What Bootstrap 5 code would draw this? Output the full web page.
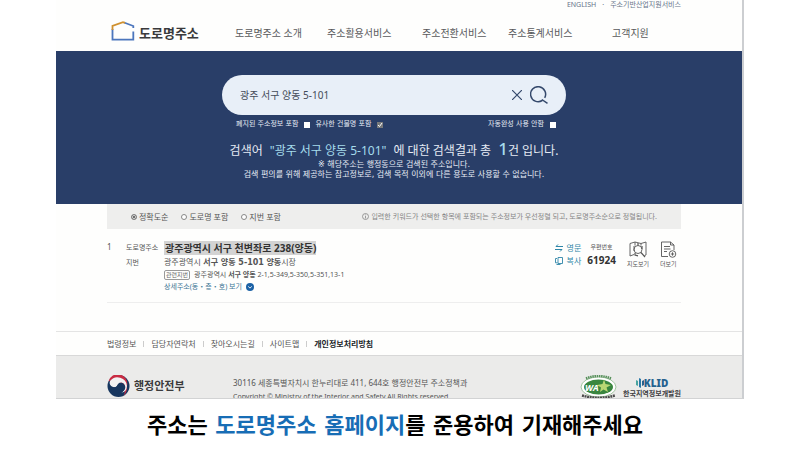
<!DOCTYPE html>
<html lang="ko">
<head>
<meta charset="utf-8">
<meta name="viewport" content="width=device-width, initial-scale=1">
<title>도로명주소</title>
<link rel="stylesheet" href="https://cdn.jsdelivr.net/npm/bootstrap@5.3.0/dist/css/bootstrap.min.css">
<style>
body{font-family:"Noto Sans","Noto Sans CJK KR",sans-serif;font-size:8px;line-height:12px;color:#555;background:#fff}
a{color:inherit;text-decoration:none}
button{background:none;border:0;padding:0;color:inherit}
svg{display:block;flex:none}
.wide-space{font-family:"DejaVu Sans","Noto Sans CJK KR",sans-serif}
.site{margin:0 56px;background:#fefefd;border-right:2px solid #ccced1;border-bottom:1px solid #d2d3d4}
.inner{padding-left:51px;padding-right:61px}
.fs7{font-size:7px}
.fs6{font-size:6px}
.util{line-height:10px;color:#66748a;gap:6px}
.brandbar{padding:11px 0 6px}
.brand{font-size:13px;line-height:22px;font-weight:700;color:#3a3a3c;padding-left:4px;width:128px}
.menu{font-size:10px;line-height:22px;display:grid;grid-template-columns:92fr 95fr 86fr 104fr 69fr;color:#58595b}
.hero{background:#293e68;color:#e6ebf4;padding-top:24px;padding-bottom:24px}
.finder{max-width:344px;margin:0 auto}
.pill{height:40px;background:#e8eff8;border-radius:20px;padding:0 18px;color:#34486b}
.pill input{font-size:10px;background:none;border:0;outline:0;color:#444b58;padding:0;min-width:0}
.opts{padding:4px 10px 0 14px;line-height:10px;gap:5px}
.opts label{gap:6px}
.opts input{appearance:none;width:6px;height:6px;margin:1px 0 0;background:#fff}
.opts .ticked{position:relative}
.opts .ticked input{background:#77797b}
.opts .ticked svg{position:absolute;right:0;bottom:1px;pointer-events:none}
.summary{font-size:12px;line-height:19px;font-weight:400;margin:12px 0 0;gap:7px}
.summary em{font-style:normal;color:#a6dcec}
.summary b{font-size:17px;line-height:0;font-weight:500;color:#a6dcec}
.notes{line-height:10px;margin:0}
.sortbar{background:#eeeeed;padding:6px 24px;line-height:13px}
.sortbar input{appearance:none;width:6px;height:6px;border:1px solid #888;border-radius:50%;margin:0 2px 0 0;background:#fff}
.sortbar input:checked{background:#444;box-shadow:inset 0 0 0 1px #eee}
.sorts{gap:13px}
.hint{color:#858585;font-family:"Noto Sans CJK KR",sans-serif}
.hint svg{margin-right:2px}
.result{padding:12px 4px 9px 0;border-bottom:1px solid #eee}
.num{width:19px}
.lab{width:38px}
.road{font-size:10px;line-height:14px;font-weight:700;color:#333;background:#d3d3d3;padding-left:1px}
.jibun{margin-top:2px}
.tagbox{border:1px solid #999;border-radius:2px;line-height:8px;padding:0 1px;color:#666}
.detail{color:#3c7594}
.tools{line-height:13px}
.tools .teal{color:#2f86a8;margin-right:6px}
.tools .gap-next{margin-right:11px}
.zip{font-size:10px;font-weight:700;color:#333}
.links{margin-top:28px;border-top:1px solid #e4e4e4;border-bottom:1px solid #d8d8d8;padding-top:6px;padding-bottom:5px}
.links li+li::before{content:"";display:inline-block;width:1px;height:6px;background:#ccc;margin:0 7px}
.org{background:#ebebea;height:42px;overflow:hidden}
.ministry{font-size:11px;line-height:22px;font-weight:700;color:#3a3a3c;width:126px;padding-top:19px}
.addr{padding-top:20px;font-style:normal}
.addr span{display:block;line-height:14px}
.wamark{margin:19px 6px 0 0}
.klid{padding-top:21px;color:#3d3d42;font-weight:700;line-height:9px}
.klid strong{font-size:10px;line-height:12px;color:#26628f}
.caption{font-size:22px;line-height:30px;font-weight:700;color:#000;padding-top:12px;margin:0 56px}
.caption a{color:#176db5}
</style>
<script src="https://cdn.jsdelivr.net/npm/bootstrap@5.3.0/dist/js/bootstrap.bundle.min.js"></script>
</head>
<body>
<div class="site">
  <header class="inner">
    <div class="util fs7 d-flex justify-content-end"><a href="#">ENGLISH</a><span>·</span><a href="#">주소기반산업지원서비스</a></div>
    <div class="brandbar d-flex align-items-center">
      <a href="#" class="brand d-flex align-items-center gap-1">
        <svg class="mb-1" width="24" height="20" viewBox="0 0 24 20" fill="none" stroke-width="1.8"><path d="M1.500 8V18.600H22.300V10.500M22.300 7V5L13 1.500" stroke="#4c76bd"/><path d="M1.500 9V4.800L12 1.200L14 1.800" stroke="#d0912f"/></svg>
        도로명주소
      </a>
      <nav class="menu flex-grow-1">
        <a href="#">도로명주소 소개</a><a href="#">주소활용서비스</a><a href="#">주소전환서비스</a><a href="#">주소통계서비스</a><a href="#">고객지원</a>
      </nav>
    </div>
  </header>

  <main>
    <section class="hero inner">
      <form class="finder">
        <div class="pill d-flex align-items-center">
          <input class="flex-grow-1" type="text" value="광주 서구 양동 5-101" aria-label="주소 검색">
          <button type="reset" aria-label="지우기" class="me-2"><svg width="10" height="10" viewBox="0 0 10 10" stroke="currentColor" stroke-width="1.200"><path d="M0 0L10 10M10 0L0 10"/></svg></button>
          <button type="button" aria-label="검색"><svg width="18" height="18" viewBox="0 0 18 18" fill="none" stroke="currentColor" stroke-width="1.500"><path d="M12.200 14.500A7.500 7.500 0 1 1 14.700 11.800M11.800 13.500L17.500 17.300"/></svg></button>
        </div>
        <div class="opts wide-space fs7 d-flex">
          <label class="d-flex align-items-center">폐지된 주소정보 포함 <input type="checkbox"></label>
          <label class="ticked d-flex align-items-center">유사한 건물명 포함 <input type="checkbox" checked><svg width="6" height="6" viewBox="0 0 6 6" fill="none" stroke="#fff"><path d="M1 3L2.500 4.500L5 1"/></svg></label>
          <label class="d-flex align-items-center ms-auto">자동완성 사용 안함 <input type="checkbox"></label>
        </div>
      </form>
      <h1 class="summary d-flex justify-content-center"><span>검색어</span><em>"광주 서구 양동 5-101"</em><span>에 대한 검색결과 총</span><span><b>1</b>건 입니다.</span></h1>
      <p class="notes wide-space text-center">※ 해당주소는 행정동으로 검색된 주소입니다.<br>검색 편의를 위해 제공하는 참고정보로, 검색 목적 이외에 다른 용도로 사용할 수 없습니다.</p>
    </section>

    <div class="inner">
      <div class="sortbar d-flex align-items-center justify-content-between">
        <div class="sorts d-flex">
          <label class="d-flex align-items-center"><input type="radio" name="sort" checked>정확도순</label>
          <label class="d-flex align-items-center"><input type="radio" name="sort">도로명 포함</label>
          <label class="d-flex align-items-center"><input type="radio" name="sort">지번 포함</label>
        </div>
        <div class="hint fs7 d-flex align-items-center">
          <svg width="7" height="7" viewBox="0 0 7 7" fill="none" stroke="currentColor" stroke-width=".8"><circle cx="3.500" cy="3.500" r="3"/><path d="M3.500 3V5.500M3.500 1.500V2.300"/></svg>
          입력한 키워드가 선택한 항목에 포함되는 주소정보가 우선정렬 되고, 도로명주소순으로 정렬됩니다.
        </div>
      </div>

      <article class="result d-flex">
        <span class="num">1</span>
        <div class="flex-grow-1">
          <div class="d-flex align-items-center"><span class="lab fs7">도로명주소</span><a href="#" class="road">광주광역시 서구 천변좌로 238(양동)</a></div>
          <div class="jibun d-flex"><span class="lab fs7">지번</span><span class="wide-space">광주광역시 <b class="fw-bold">서구 양동 5-101</b> <span class="fw-bold">양동</span>시장</span></div>
          <div class="d-flex align-items-center fs7"><span class="lab"></span><span class="tagbox fs6">관련지번</span><span class="ms-1">광주광역시 <b>서구 양동</b> 2-1,5-349,5-350,5-351,13-1</span></div>
          <div class="d-flex align-items-center fs7"><span class="lab"></span><a href="#" class="detail d-flex align-items-center">상세주소(동・층・호) 보기
            <svg class="ms-1" width="8" height="8" viewBox="0 0 8 8" fill="none"><circle cx="4" cy="4" r="4" fill="#1c62a6"/><path d="M2.200 3.400L4 5.100L5.800 3.400" stroke="#fff" stroke-width=".9"/></svg></a></div>
        </div>
        <div class="tools d-flex align-items-start">
          <div class="teal">
            <a href="#" class="d-flex align-items-center"><svg class="me-1" width="8" height="8" viewBox="0 0 8 8" fill="none" stroke="currentColor"><path d="M8 2.500H1M3 .5L1 2.500M0 5.500H7M5 7.500L7 5.500"/></svg>영문</a>
            <a href="#" class="d-flex align-items-center"><svg class="me-1" width="8" height="8" viewBox="0 0 8 8" fill="none" stroke="currentColor" stroke-width=".9"><path d="M3 .5H7.500V6.500H3ZM2 1.500H.5V5.800H2.500M1.500 7.500H5.500"/></svg>복사</a>
          </div>
          <div class="text-center gap-next"><div class="fs6">우편번호</div><div class="zip">61924</div></div>
          <a href="#" class="fs6 gap-next"><svg class="mx-auto" width="18" height="17" viewBox="0 0 18 17" fill="none" stroke="currentColor" stroke-width=".9"><path d="M5 13.500L1 15V2.500L6 1L12 2.500L17 1V14L15.500 14.500M6 1V4.500M12 2.500V4.500M5 5V10"/><circle cx="9" cy="8.500" r="4"/><path d="M12 11.500L16 16M6 12V14L9 14.800M9 4.500V2M13 8V5" stroke-width="1.200"/></svg>지도보기</a>
          <a href="#" class="fs6"><svg class="mx-auto" width="17" height="17" viewBox="0 0 17 17" fill="none" stroke="currentColor" stroke-width=".9"><path d="M8 15.500H1.500V1H10.500L14 4V9M10.500 1V4H14M4 5.500H10M4 8H10.500M4 10.500H7"/><circle cx="12.500" cy="13" r="3.300"/><path d="M12.500 11.300V14.700M10.800 13H14.200"/></svg>더보기</a>
        </div>
      </article>
    </div>
  </main>

  <footer>
    <nav class="links inner"><ul class="list-unstyled d-flex m-0">
      <li><a href="#">법령정보</a></li><li><a href="#">담당자연락처</a></li><li><a href="#">찾아오시는길</a></li><li><a href="#">사이트맵</a></li><li><a href="#" class="fw-bold text-dark">개인정보처리방침</a></li>
    </ul></nav>
    <div class="org inner d-flex align-items-start">
      <div class="ministry d-flex align-items-center">
        <svg class="me-1" width="23" height="22" viewBox="0 0 22 22"><circle cx="11" cy="11" r="11" fill="#17365f"/><path d="M1 6.500A11 11 0 0 1 16 21Q20 17 19.500 11A8.500 8.500 0 0 0 1 6.500Z" fill="#c92c43"/><path d="M2.500 6A9.500 9.500 0 0 1 19.500 11Q19 17 14 17.500Q19 14 17 9.500Q14 6 10.500 9Q9 13 5.500 12Q1 10 2.500 6Z" fill="#f2f2f3"/><path d="M5 12Q9 13 10.500 9.500Q13 6.500 16 8.500Q20 13 15 17L7 19L2 13Z" fill="#17365f"/></svg>
        행정안전부
      </div>
      <address class="addr mb-0"><span>30116 세종특별자치시 한누리대로 411, 644호 행정안전부 주소정책과</span><span class="fs7">Copyright © Ministry of the Interior and Safety.All Rights reserved.</span></address>
      <div class="d-flex ms-auto">
        <svg class="wamark" width="37" height="24" viewBox="0 0 37 24" role="img" aria-label="WA 웹접근성"><ellipse cx="18.500" cy="12" rx="17.500" ry="10" fill="#fff" stroke="#8eb98d" stroke-width=".8"/><path d="M6 3.500Q18.500-1.500 31 3.500" fill="none" stroke="#57905b" stroke-width="2.500" stroke-dasharray="1.500 .7"/><ellipse cx="18.500" cy="12" rx="14.500" ry="7.500" fill="#39863f"/><path d="M24 4.500L25.500 9L31 10L26.500 12.500L28 17L23.500 14.500L20 17L21 12.500L17 10L22.500 9Z" fill="#b9d774"/><text x="5" y="15.500" font-size="9" font-weight="700" font-style="italic" fill="#fff">WA</text><path d="M2 20.500Q18.500 25 35 20.500" fill="none" stroke="#4b4b4b" stroke-width="2.500" stroke-dasharray="2 .6"/></svg>
        <div class="klid fs7">
          <div class="d-flex align-items-center justify-content-center"><svg width="8" height="10" viewBox="0 0 8 10"><path d="M0 2L2 3V8L0 7Z" fill="#49a4a0"/><path d="M3 0L5 1V10L3 9Z" fill="#2878a8"/><path d="M6 3L8 2V7L6 8Z" fill="#26628f"/></svg><strong>KLID</strong></div>
          한국지역정보개발원
        </div>
      </div>
    </div>
  </footer>
</div>
<p class="caption inner wide-space text-center mb-0">주소는 <a href="#">도로명주소 홈페이지</a>를 준용하여 기재해주세요</p>
</body>
</html>
